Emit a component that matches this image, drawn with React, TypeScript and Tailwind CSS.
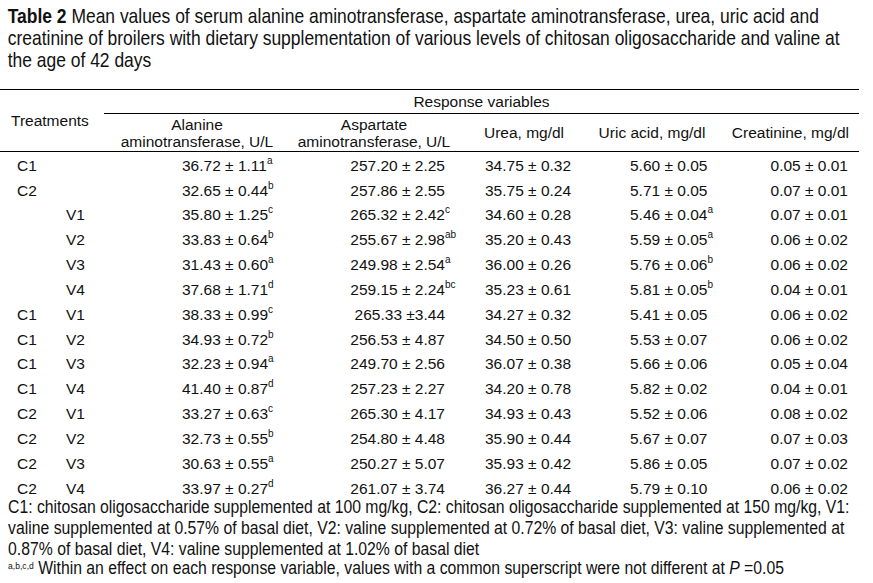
import React from 'react';

type Row = {
  c: string;
  v: string;
  alt: [string, string];
  ast: [string, string];
  urea: string;
  uric: [string, string];
  crea: string;
};

const rows: Row[] = [
  { c: 'C1', v: '', alt: ['36.72 ± 1.11', 'a'], ast: ['257.20 ± 2.25', ''], urea: '34.75 ± 0.32', uric: ['5.60 ± 0.05', ''], crea: '0.05 ± 0.01' },
  { c: 'C2', v: '', alt: ['32.65 ± 0.44', 'b'], ast: ['257.86 ± 2.55', ''], urea: '35.75 ± 0.24', uric: ['5.71 ± 0.05', ''], crea: '0.07 ± 0.01' },
  { c: '', v: 'V1', alt: ['35.80 ± 1.25', 'c'], ast: ['265.32 ± 2.42', 'c'], urea: '34.60 ± 0.28', uric: ['5.46 ± 0.04', 'a'], crea: '0.07 ± 0.01' },
  { c: '', v: 'V2', alt: ['33.83 ± 0.64', 'b'], ast: ['255.67 ± 2.98', 'ab'], urea: '35.20 ± 0.43', uric: ['5.59 ± 0.05', 'a'], crea: '0.06 ± 0.02' },
  { c: '', v: 'V3', alt: ['31.43 ± 0.60', 'a'], ast: ['249.98 ± 2.54', 'a'], urea: '36.00 ± 0.26', uric: ['5.76 ± 0.06', 'b'], crea: '0.06 ± 0.02' },
  { c: '', v: 'V4', alt: ['37.68 ± 1.71', 'd'], ast: ['259.15 ± 2.24', 'bc'], urea: '35.23 ± 0.61', uric: ['5.81 ± 0.05', 'b'], crea: '0.04 ± 0.01' },
  { c: 'C1', v: 'V1', alt: ['38.33 ± 0.99', 'c'], ast: ['265.33 ±3.44', ''], urea: '34.27 ± 0.32', uric: ['5.41 ± 0.05', ''], crea: '0.06 ± 0.02' },
  { c: 'C1', v: 'V2', alt: ['34.93 ± 0.72', 'b'], ast: ['256.53 ± 4.87', ''], urea: '34.50 ± 0.50', uric: ['5.53 ± 0.07', ''], crea: '0.06 ± 0.02' },
  { c: 'C1', v: 'V3', alt: ['32.23 ± 0.94', 'a'], ast: ['249.70 ± 2.56', ''], urea: '36.07 ± 0.38', uric: ['5.66 ± 0.06', ''], crea: '0.05 ± 0.04' },
  { c: 'C1', v: 'V4', alt: ['41.40 ± 0.87', 'd'], ast: ['257.23 ± 2.27', ''], urea: '34.20 ± 0.78', uric: ['5.82 ± 0.02', ''], crea: '0.04 ± 0.01' },
  { c: 'C2', v: 'V1', alt: ['33.27 ± 0.63', 'c'], ast: ['265.30 ± 4.17', ''], urea: '34.93 ± 0.43', uric: ['5.52 ± 0.06', ''], crea: '0.08 ± 0.02' },
  { c: 'C2', v: 'V2', alt: ['32.73 ± 0.55', 'b'], ast: ['254.80 ± 4.48', ''], urea: '35.90 ± 0.44', uric: ['5.67 ± 0.07', ''], crea: '0.07 ± 0.03' },
  { c: 'C2', v: 'V3', alt: ['30.63 ± 0.55', 'a'], ast: ['250.27 ± 5.07', ''], urea: '35.93 ± 0.42', uric: ['5.86 ± 0.05', ''], crea: '0.07 ± 0.02' },
  { c: 'C2', v: 'V4', alt: ['33.97 ± 0.27', 'd'], ast: ['261.07 ± 3.74', ''], urea: '36.27 ± 0.44', uric: ['5.79 ± 0.10', ''], crea: '0.06 ± 0.02' },
];

const cols = 'grid grid-cols-[60px_44px_186px_168px_132px_124px_145px]';

// superscript takes no width so the numbers stay on their column
const Sup = ({ s }: { s: string }) =>
  s ? (
    <sup className="relative -top-[7px] inline-block w-0 text-[10px] leading-none">{s}</sup>
  ) : null;

export default function App() {
  return (
    <div className="h-[583px] w-[873px] overflow-hidden bg-white text-[#111] font-['Liberation_Sans',Arial,sans-serif]">
      {/* caption is set in a narrow face in the source, squeezed here */}
      <p className="origin-left scale-x-[0.86] whitespace-nowrap pl-[9px] pt-[5px] text-[20.3px] leading-[22px]">
        <b>Table 2</b> Mean values of serum alanine aminotransferase, aspartate aminotransferase, urea, uric acid and
        <br />
        creatinine of broilers with dietary supplementation of various levels of chitosan oligosaccharide and valine at
        <br />
        the age of 42 days
      </p>

      <div className="mt-[18px] w-[859px] text-[15.5px]">
        <div className={`${cols} grid-rows-[24px_37px] border-y border-black`}>
          <div className="col-span-2 row-span-2 flex items-center pl-[11px]">Treatments</div>
          <div className="col-span-5 flex items-center justify-center border-b border-black leading-none">
            Response variables
          </div>
          <div className="flex flex-col items-center justify-center leading-[17px]">
            <span>Alanine</span>
            <span>aminotransferase, U/L</span>
          </div>
          <div className="flex flex-col items-center justify-center leading-[17px]">
            <span>Aspartate</span>
            <span>aminotransferase, U/L</span>
          </div>
          <div className="flex items-center justify-center">Urea, mg/dl</div>
          <div className="flex items-center justify-center">Uric acid, mg/dl</div>
          <div className="flex items-center justify-end pr-[10px]">Creatinine, mg/dl</div>
        </div>

        <div className="pt-[1px]">
          {rows.map((r, i) => (
            <div key={i} className={`${cols} h-[24.85px] items-center whitespace-nowrap leading-none`}>
              <div className="pl-[17px]">{r.c}</div>
              <div className="pl-[6px]">{r.v}</div>
              <div className="pl-[78px]">
                {r.alt[0]}
                <Sup s={r.alt[1]} />
              </div>
              <div className="pr-[13px] text-right">
                {r.ast[0]}
                <Sup s={r.ast[1]} />
              </div>
              <div className="pl-[27px]">{r.urea}</div>
              <div className="pl-[40px]">
                {r.uric[0]}
                <Sup s={r.uric[1]} />
              </div>
              <div className="pr-[11px] text-right">{r.crea}</div>
            </div>
          ))}
        </div>
      </div>

      <div className="-mt-[4px] origin-left scale-x-[0.9] whitespace-nowrap pl-[9px] text-[17.5px] leading-[21px]">
        <p>
          C1: chitosan oligosaccharide supplemented at 100 mg/kg, C2: chitosan oligosaccharide supplemented at 150 mg/kg, V1:
          <br />
          valine supplemented at 0.57% of basal diet, V2: valine supplemented at 0.72% of basal diet, V3: valine supplemented at
          <br />
          0.87% of basal diet, V4: valine supplemented at 1.02% of basal diet
        </p>
        <p className="leading-[16px]">
          <sup className="text-[9.5px]">a,b,c,d</sup> Within an effect on each response variable, values with a common superscript were not different at <i>P</i> =0.05
        </p>
      </div>
    </div>
  );
}
